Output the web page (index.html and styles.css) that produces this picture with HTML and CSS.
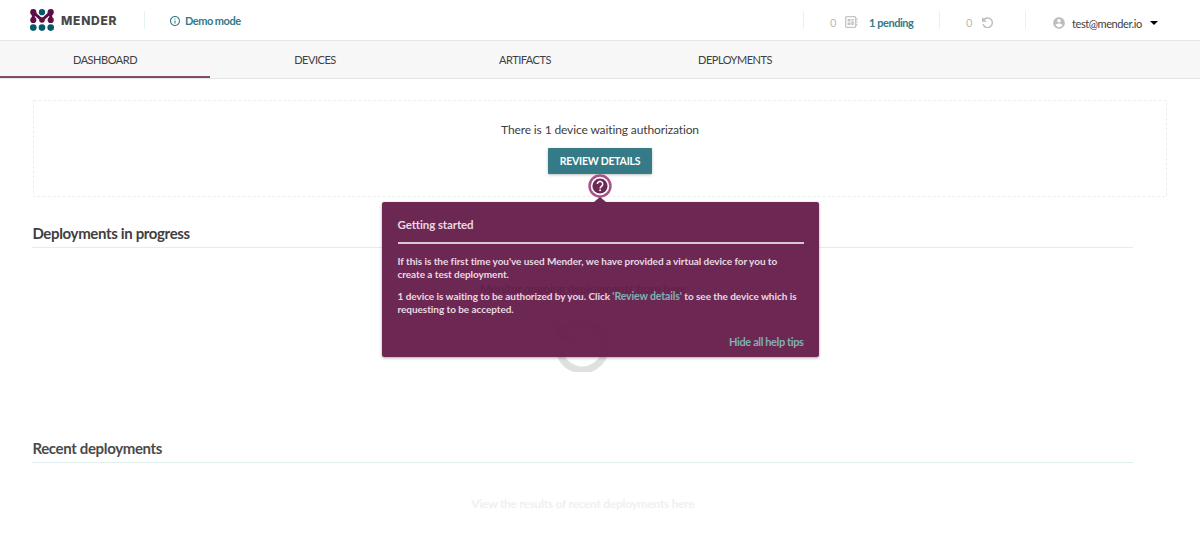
FILE: index.html
```html
<!DOCTYPE html>
<html lang="en">
<head>
<meta charset="utf-8">
<title>Mender</title>
<link rel="stylesheet" href="styles.css">
</head>
<body>
<header class="header">
  <div class="brand">
    <svg class="logo" viewBox="0 0 24 22" width="24" height="22">
      <path d="M3.300 11V3.300L12 11l8.700-7.700V11" fill="none" stroke="#5d0f43" stroke-width="3"/>
      <g fill="#5d0f43"><circle cx="3.300" cy="3.200" r="3.100"/><circle cx="20.700" cy="3.200" r="3.100"/><circle cx="3.300" cy="11" r="3.100"/><circle cx="12" cy="11" r="2.800"/><circle cx="20.700" cy="11" r="3.100"/></g>
      <g fill="#015969"><circle cx="12" cy="3.200" r="3.100"/><circle cx="3.300" cy="18.600" r="3.300"/><circle cx="12" cy="18.600" r="3.300"/><circle cx="20.700" cy="18.600" r="3.300"/></g>
    </svg>
    <span class="wordmark">MENDER</span>
  </div>
  <div class="demo">
    <svg viewBox="0 0 24 24" width="12" height="12" fill="#347a87"><path d="M11 17h2v-6h-2v6zm1-15C6.480 2 2 6.480 2 12s4.480 10 10 10 10-4.480 10-10S17.520 2 12 2zm0 18c-4.410 0-8-3.590-8-8s3.590-8 8-8 8 3.590 8 8-3.590 8-8 8zM11 9h2V7h-2v2z"/></svg>
    <span class="demo-label">Demo mode</span>
  </div>
  <div class="status devices">
    <span class="count">0</span>
    <svg class="board" viewBox="0 0 13 12" width="13" height="12"><rect x=".7" y=".7" width="10" height="10.600" rx="1.200" fill="none" stroke="#c4c4c4" stroke-width="1.300"/><path d="M11 2.500h1.600v1.200H11zM11 5.400h1.600v1.200H11zM11 8.300h1.600v1.200H11zM2.600 3h3v2.500h-3zM6.400 3h2.400v1.500H6.400zM6.400 5.300h2.400V9H6.400zM2.600 6.400h3V9h-3z" fill="#c4c4c4"/></svg>
    <span class="pending">1 pending</span>
  </div>
  <div class="status progress">
    <span class="count">0</span>
    <svg class="replay" viewBox="0 0 54 54" width="11" height="11"><path d="M7 16.500A23.500 23.500 0 1 1 5 36" fill="none" stroke="#bdbdbd" stroke-width="7"/><path d="M0 0v23h23z" fill="#bdbdbd"/></svg>
  </div>
  <div class="status user">
    <svg viewBox="0 0 24 24" width="14" height="14" fill="#bdbdbd"><path d="M12 2C6.480 2 2 6.480 2 12s4.480 10 10 10 10-4.480 10-10S17.520 2 12 2zm0 3c1.660 0 3 1.340 3 3s-1.340 3-3 3-3-1.340-3-3 1.340-3 3-3zm0 14.200c-2.500 0-4.710-1.280-6-3.220.03-1.990 4-3.080 6-3.080 1.990 0 5.970 1.090 6 3.080-1.290 1.940-3.500 3.220-6 3.220z"/></svg>
    <span class="email">test@mender.io</span>
    <svg class="caret" viewBox="0 0 8 4" width="8" height="4"><path d="M0 0h8L4 4z"/></svg>
  </div>
</header>
<nav class="tabs">
  <a class="tab active">DASHBOARD</a>
  <a class="tab">DEVICES</a>
  <a class="tab">ARTIFACTS</a>
  <a class="tab">DEPLOYMENTS</a>
</nav>
<main class="main">
  <section class="notice">
    <svg class="dashes"><rect x=".5" y=".5" width="1133" height="96" fill="none" stroke="#ededed" stroke-dasharray="3 2"/></svg>
    <p class="notice-text">There is 1 device waiting authorization</p>
    <button class="review">REVIEW DETAILS</button>
    <aside class="help">
      <svg class="help-icon" viewBox="0 0 24 24" width="24" height="24"><circle cx="12" cy="12" r="11.700" fill="#a55488"/><circle cx="12" cy="12" r="9.200" fill="#fff"/><circle cx="12" cy="12" r="7.600" fill="#6d2955"/><path d="M9.300 10.100a2.700 2.700 0 1 1 4.400 2.100c-1.100.8-1.600 1.200-1.600 2.300" fill="none" stroke="#fff" stroke-width="1.500"/><rect x="11.300" y="15.500" width="1.600" height="1.600" fill="#fff"/></svg>
      <div class="tip">
        <h3 class="tip-title">Getting started</h3>
        <p class="tip-text">If this is the first time you've used Mender, we have provided a virtual device for you to<br>create a test deployment.</p>
        <p class="tip-text second">1 device is waiting to be authorized by you. Click <a class="tip-link quoted">'Review details'</a> to see the device which is<br>requesting to be accepted.</p>
        <div class="hide-row"><a class="tip-link">Hide all help tips</a></div>
      </div>
    </aside>
  </section>
  <section class="block ongoing">
    <h2 class="heading">Deployments in progress</h2>
    <p class="empty monitor">Monitor ongoing deployments from here</p>
    <svg class="big-replay" viewBox="0 0 54 54" width="54" height="54"><path d="M7 16.500A23.500 23.500 0 1 1 5 36" fill="none" stroke="#e0e0e0" stroke-width="7"/><path d="M0 0v23h23z" fill="#e0e0e0"/></svg>
  </section>
  <section class="block recent">
    <h2 class="heading heading-soft">Recent deployments</h2>
    <p class="empty view">View the results of recent deployments here</p>
  </section>
</main>
</body>
</html>
```
FILE: styles.css
```css
* { box-sizing: border-box; }
body { margin: 0; width: 1200px; height: 558px; overflow: hidden; background: #fff; color: #404041; font-family: Lato, sans-serif; font-size: 11px; }
p, h2, h3 { margin: 0; }
svg { display: block; flex: none; }
span, a { white-space: nowrap; }
.header { display: flex; height: 41px; align-items: flex-start; padding-left: 30px; border-bottom: 1px solid #e5e5e5; }
.brand { display: flex; width: 115px; height: 18px; margin-top: 11px; border-right: 1px solid #e6f2f1; }
.logo { margin-top: -2px; }
.wordmark { margin-left: 7px; font: 800 12px/19px Inter, sans-serif; letter-spacing: .75px; color: #484849; }
.demo { display: flex; align-items: center; gap: 4px; margin: 10px 0 0 24px; height: 20px; color: #347a87; font-weight: 700; letter-spacing: -.5px; font-size: 11px; }
.demo svg { margin-top: 2px; }
.status { display: flex; align-items: center; height: 18px; margin-top: 11px; border-left: 1px solid #e6f2f1; }
.devices { margin-left: auto; width: 136px; padding: 4px 0 0 26px; }
.progress { width: 86px; padding: 4px 0 0 26px; }
.user { width: 175px; padding: 6px 0 0 26px; }
.count { width: 7px; color: #b8b8b8; }
.board { margin-left: 8px; }
.pending { margin-left: 11px; font-weight: 700; color: #347a87; letter-spacing: -.45px; }
.replay { margin-left: 9px; }
.email { margin-left: 6px; letter-spacing: -.42px; }
.caret { margin-left: 8px; }
.tabs { display: flex; height: 38px; background: #f7f7f7; border-bottom: 1px solid #e5e5e5; }
.tab { width: 210px; height: 37px; line-height: 37px; text-align: center; border-bottom: 2px solid transparent; letter-spacing: -.48px; }
.active { border-color: #844a6e; }
.main { padding: 21px 33px 0; }
.notice { position: relative; display: flex; flex-direction: column; align-items: center; height: 97px; padding-top: 22px; }
.dashes { position: absolute; inset: 0; width: 1134px; height: 97px; }
.notice-text { font-size: 12px; line-height: 16px; letter-spacing: -.12px; }
.review { width: 104px; height: 26px; margin-top: 10px; padding: 0; border: 0; border-radius: 1px; background: #347a87; color: #fff; font: 700 10.500px/26px Lato, sans-serif; letter-spacing: -.25px; box-shadow: 0 1px 3px rgba(0,0,0,.25); white-space: nowrap; }
.help { position: absolute; z-index: 2; top: 74px; left: 349px; width: 436px; display: flex; flex-direction: column; align-items: center; }
.tip { position: relative; width: 437px; height: 155px; margin-top: 4px; padding: 15px 15px 15px 16px; border-radius: 2px; background: rgba(99,27,72,.94); color: #e8d9e3; box-shadow: 0 1px 3px rgba(0,0,0,.35); font-size: 10px; font-weight: 700; }
.tip::before { content: ""; position: absolute; top: -5px; left: 212px; border: solid transparent; border-width: 0 6px 5px; border-bottom-color: #6c2953; }
.tip-title { height: 27px; border-bottom: 2px solid #d8c8d2; font-size: 11.500px; line-height: 16px; letter-spacing: -.1px; }
.tip-text { margin-top: 11px; line-height: 12.500px; letter-spacing: -.05px; white-space: nowrap; }
.second { margin-top: 10px; }
.tip-link { color: #7fb0b3; }
.quoted { font-size: 10.500px; line-height: 12px; letter-spacing: -.12px; }
.hide-row { display: flex; justify-content: flex-end; margin-top: 19px; line-height: 16px; font-size: 11px; letter-spacing: -.39px; }
.block { width: 1101px; margin-left: -.6px; display: flex; flex-direction: column; align-items: center; }
.ongoing { height: 215px; padding-top: 26px; }
.heading { width: 1101px; height: 25px; border-bottom: 1px solid #e0eeee; font-size: 15px; line-height: 20px; font-weight: 700; letter-spacing: -.35px; }
.empty { font-size: 12px; line-height: 16px; font-weight: 700; letter-spacing: -.28px; white-space: nowrap; }
.monitor { margin-top: 33px; color: #777; }
.big-replay { margin: 21px 0 0 -1px; }
.recent { padding-top: 26px; }
.heading-soft { color: #4a4a4b; }
.view { margin-top: 33px; color: #f0f0f0; }
```
